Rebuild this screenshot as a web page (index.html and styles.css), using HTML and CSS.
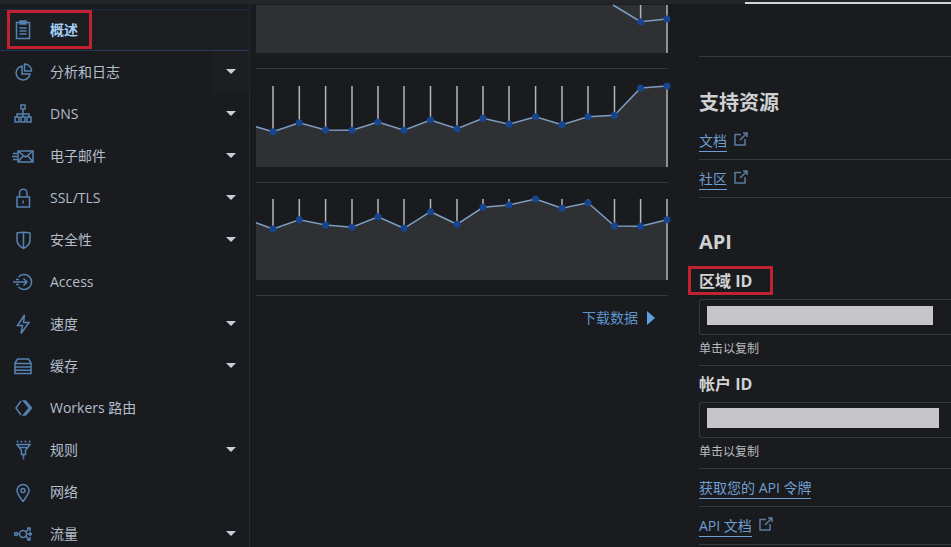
FILE: index.html
```html
<!DOCTYPE html>
<html>
<head>
  <meta name="viewport" content="width=device-width, initial-scale=1" />
  <title>概述</title>
  <link rel="stylesheet" href="styles.css">
</head>
<body>
  <div class="top-strip"><div class="top-line"></div></div>
  <div class="layout">
    <nav class="sidebar">
      <a class="nav-item active">
        <svg class="icon" viewBox="0 0 20 20"><path d="M3.500 2.500h13v16h-13zM7 1h6v3H7zM6.500 8h7M6.500 11h7M6.500 14h7"/></svg>
        <span>概述</span>
        <b class="mark"></b>
      </a>
      <a class="nav-item hover">
        <svg class="icon" viewBox="0 0 20 20"><path d="M9 4a7 7 0 1 0 8 8H9zM11.500 2a7 7 0 0 1 7 7h-7z"/></svg>
        <span>分析和日志</span><i class="caret"></i>
      </a>
      <a class="nav-item">
        <svg class="icon" viewBox="0 0 20 20"><path d="M8 1h4v4H8zM10 5v5M4 13v-3h12v3M10 10v3M2 13h4v5H2zM8 13h4v5H8zM14 13h4v5h-4z"/></svg>
        <span>DNS</span><i class="caret"></i>
      </a>
      <a class="nav-item">
        <svg class="icon wide" viewBox="0 0 24 20"><path d="M8 5h15v11H8zM8 5l7.500 6L23 5M8 16l5.500-6.500M23 16l-5.500-6.500M3 7.500h4M2 10.500h5M3 13.500h4"/></svg>
        <span>电子邮件</span><i class="caret"></i>
      </a>
      <a class="nav-item">
        <svg class="icon" viewBox="0 0 20 20"><path d="M4 9h12.500v10H4zM6.500 9V5a3.700 3.700 0 0 1 7.500 0v4M10.200 12.500v3"/></svg>
        <span>SSL/TLS</span><i class="caret"></i>
      </a>
      <a class="nav-item">
        <svg class="icon" viewBox="0 0 20 20"><path d="M4 3q6.500-1.500 13 0v7c0 4-2.500 6.500-6.500 8.500C6.500 16.500 4 14 4 10zM10.500 2.500v16"/></svg>
        <span>安全性</span>
        <i class="caret"></i>
      </a>
      <a class="nav-item">
        <svg class="icon wide" viewBox="0 0 24 20"><path d="M8.500 5A7.500 7.500 0 1 1 8.500 15M3 10h14M13.500 6.500 17 10l-3.500 3.500M6 7.500h3M6 12.500h3"/></svg>
        <span>Access</span>
      </a>
      <a class="nav-item">
        <svg class="icon" viewBox="0 0 20 20"><path d="M11.500 1 4.500 11.500h5L8 19.500 16 8.500h-5.500z"/></svg>
        <span>速度</span><i class="caret"></i>
      </a>
      <a class="nav-item">
        <svg class="icon" viewBox="0 0 20 20"><path d="M4.500 3h11L18 7v4H2V7zM2 7.500h16M2 11h16v6.500H2zM2 14.200h16"/></svg>
        <span>缓存</span><i class="caret"></i>
      </a>
      <a class="nav-item">
        <svg class="icon" viewBox="0 0 20 20"><path d="M8 3 3 10l5 7M10.500 3h2l6 7-6 7h-2l6-7z"/></svg>
        <span>Workers 路由</span>
      </a>
      <a class="nav-item">
        <svg class="icon" viewBox="0 0 20 20"><path d="M4 4.500h13l-4.500 6v4h-4v-4zM7 7.500h7M10.500 14.500v3"/><path class="icon-dots" d="M4.500 1.500h0M8.500 1.500h0M12.500 1.500h0M16.500 1.500h0M10.500 18.500h0"/></svg>
        <span>规则</span><i class="caret"></i>
      </a>
      <a class="nav-item">
        <svg class="icon" viewBox="0 0 20 20"><path d="M10 19.500C7 15 4 12 4 8.500a6 6 0 0 1 12 0C16 12 13 15 10 19.500z"/><circle cx="10" cy="8.500" r="2"/></svg>
        <span>网络</span>
      </a>
      <a class="nav-item">
        <svg class="icon wide" viewBox="0 0 24 20"><circle cx="6" cy="10" r="1.500"/><circle cx="13" cy="10" r="3.500"/><path d="M7.500 10h2M16 8l3-4M16 12l3 4M16.500 10h5M19.500 8l2 2-2 2M17 4h3v3M17 16h3v-3"/></svg>
        <span>流量</span><i class="caret"></i>
      </a>
    </nav>

    <main class="charts">
      <div class="chart-row first">
        <svg class="chart short" viewBox="0 0 412 48">
          <path class="area" d="M0 0H411V48H0z"/>
          <path class="ticks" d="M384.600 0V16.700M411 0V48"/>
          <path class="line" d="M357 0 384.600 16.700 411 14"/>
          <path class="dots" d="M384.600 16.700h0M411 14h0"/>
        </svg>
      </div>
      <div class="chart-row">
        <svg class="chart" viewBox="0 0 412 81">
          <path class="area" d="M0 40.700 17 45.700 43.300 36.700 69.600 44 96 44.300 122 36 148 44.300 174.500 34 201 42.700 227 32.300 253 38.300 279.600 30.700 306 38.700 332 30.700 358.500 29.300 384.600 2 411 0V81H0z"/>
          <path class="ticks" d="M17 0V45.700M43.300 0V36.700M69.600 0V44M96 0V44.300M122 0V36M148 0V44.300M174.500 0V34M201 0V42.700M227 0V32.300M253 0V38.300M279.600 0V30.700M306 0V38.700M332 0V30.700M358.500 0V29.300M411 0V81"/>
          <path class="line" d="M0 40.700 17 45.700 43.300 36.700 69.600 44 96 44.300 122 36 148 44.300 174.500 34 201 42.700 227 32.300 253 38.300 279.600 30.700 306 38.700 332 30.700 358.500 29.300 384.600 2 411 0"/>
          <path class="dots" d="M17 45.700h0M43.300 36.700h0M69.600 44h0M96 44.300h0M122 36h0M148 44.300h0M174.500 34h0M201 42.700h0M227 32.300h0M253 38.300h0M279.600 30.700h0M306 38.700h0M332 30.700h0M358.500 29.300h0M384.600 2h0M411 0h0"/>
        </svg>
      </div>
      <div class="chart-row last">
        <svg class="chart" viewBox="0 0 412 81">
          <path class="area" d="M0 23.700 17 30 43.300 20.700 69.600 26 96 28.300 122 17.700 148 29.300 174.500 12.700 201 25.300 227 8.300 253 6 279.600 0 306 9.300 332 3.700 358.500 27 384.600 27.300 411 20.700V81H0z"/>
          <path class="ticks" d="M17 0V30M43.300 0V20.700M69.600 0V26M96 0V28.300M122 0V17.700M148 0V29.300M174.500 0V12.700M201 0V25.300M227 0V8.300M253 0V6M306 0V9.300M332 0V3.700M358.500 0V27M384.600 0V27.300M411 0V81"/>
          <path class="line" d="M0 23.700 17 30 43.300 20.700 69.600 26 96 28.300 122 17.700 148 29.300 174.500 12.700 201 25.300 227 8.300 253 6 279.600 0 306 9.300 332 3.700 358.500 27 384.600 27.300 411 20.700"/>
          <path class="dots" d="M17 30h0M43.300 20.700h0M69.600 26h0M96 28.300h0M122 17.700h0M148 29.300h0M174.500 12.700h0M201 25.300h0M227 8.300h0M253 6h0M279.600 0h0M306 9.300h0M332 3.700h0M358.500 27h0M384.600 27.300h0M411 20.700h0"/>
        </svg>
      </div>
      <div class="download">
        <span>下载数据</span><i class="arrow"></i>
      </div>
    </main>

    <aside class="panel">
      <div class="panel-top"></div>
      <h3 class="title-big">支持资源</h3>
      <div class="link-row first-link">
        <a class="link">文档</a>
        <svg class="ext" viewBox="0 0 14 14"><path d="M7 2.500H1V13h10V7M6 8l7-7M9 1h4v4"/></svg>
      </div>
      <div class="link-row">
        <a class="link">社区</a>
        <svg class="ext" viewBox="0 0 14 14"><path d="M7 2.500H1V13h10V7M6 8l7-7M9 1h4v4"/></svg>
      </div>
      <h3 class="title-api">API</h3>
      <div class="id-label zone"><span class="boxed">区域 ID</span></div>
      <div class="id-box"><div class="blank blank-zone"></div></div>
      <div class="hint">单击以复制</div>
      <div class="id-label account">帐户 ID</div>
      <div class="id-box"><div class="blank blank-account"></div></div>
      <div class="hint">单击以复制</div>
      <div class="link-row">
        <a class="link">获取您的 API 令牌</a>
      </div>
      <div class="link-row">
        <a class="link">API 文档</a>
        <svg class="ext" viewBox="0 0 14 14"><path d="M7 2.500H1V13h10V7M6 8l7-7M9 1h4v4"/></svg>
      </div>
    </aside>
  </div>
</body>
</html>
```

FILE: styles.css
```css
* {
  box-sizing: border-box;
}
body {
  margin: 0;
  height: 547px;
  overflow: hidden;
  background-color: #191b1e;
  color: #c4c8cc;
  font-family: "Open Sans", "Noto Sans CJK SC", sans-serif;
  font-size: 14px;
}
.top-strip {
  display: flex;
  justify-content: flex-end;
  height: 4px;
  padding-top: 2px;
  background-color: #232527;
}
.top-line {
  width: 206px;
  height: 2px;
  background-color: #d4d6d6;
}
.layout {
  display: flex;
  height: 543px;
}

/* sidebar */
.sidebar {
  flex: none;
  width: 250px;
  padding-top: 5px;
  border-right: 1px solid #26282c;
  background-color: #191b1f;
}
.nav-item {
  position: relative;
  display: flex;
  align-items: center;
  height: 42px;
  padding-left: 13px;
  color: #b3bfcb;
}
.nav-item span {
  position: relative;
  top: -1px;
}
.nav-item.active {
  border-top: 1px solid #1c2a44;
  border-bottom: 1px solid #24385c;
  background-color: #1c1e21;
  color: #a3d0f7;
  font-weight: bold;
}
.nav-item.hover::after {
  content: "";
  position: absolute;
  top: 0;
  right: 0;
  width: 37px;
  height: 42px;
  background-color: #1c1e21;
}
.mark {
  position: absolute;
  left: 7px;
  top: 0;
  width: 85px;
  height: 39px;
  border: 3px solid #c0222f;
}
.icon {
  flex: none;
  width: 20px;
  height: 20px;
  margin-right: 17px;
  fill: none;
  stroke: #5583b3;
  stroke-width: 1.500;
}
.icon.wide {
  width: 24px;
  margin-left: -3px;
  margin-right: 16px;
}
.icon-dots {
  stroke-width: 2;
  stroke-linecap: round;
}
.caret {
  position: absolute;
  z-index: 1;
  right: 13px;
  top: 18px;
  width: 0;
  height: 0;
  border-top: 5px solid #c6d0da;
  border-left: 5px solid transparent;
  border-right: 5px solid transparent;
}

/* charts */
.charts {
  flex: none;
  width: 412px;
  margin-left: 6px;
}
.chart-row {
  padding: 17px 0 15px;
  border-bottom: 1px solid #36383b;
}
.chart-row.first {
  padding-top: 1px;
}
.chart-row.last {
  padding-top: 16px;
}
.chart {
  display: block;
  width: 412px;
  height: 81px;
  overflow: visible;
}
.chart.short {
  height: 48px;
}
.area {
  fill: #2e3033;
}
.ticks {
  fill: none;
  stroke: #b3b5b8;
  stroke-width: 1.500;
}
.line {
  fill: none;
  stroke: #7f9dc0;
  stroke-width: 1.500;
}
.dots {
  fill: none;
  stroke: #17458f;
  stroke-width: 7;
  stroke-linecap: round;
}
.download {
  display: flex;
  justify-content: flex-end;
  align-items: center;
  gap: 9px;
  padding: 12px 13px 0 0;
  color: #5f93cb;
  line-height: 20px;
}
.arrow {
  width: 0;
  height: 0;
  border-left: 8px solid #5aa2e2;
  border-top: 7px solid transparent;
  border-bottom: 7px solid transparent;
}

/* right panel */
.panel {
  flex: 1;
  min-width: 0;
  margin-left: 31px;
}
.panel-top {
  height: 53px;
  border-bottom: 1px solid #36383b;
}
.title-big {
  margin: 32px 0 0;
  font-size: 20px;
  line-height: 28px;
  color: #cfd0d1;
}
.title-api {
  margin: 32px 0 0;
  font-size: 20px;
  line-height: 24px;
  color: #cfd0d1;
}
.link-row {
  display: flex;
  align-items: flex-start;
  padding: 9px 0 7px;
  border-bottom: 1px solid #36383b;
  line-height: 20px;
}
.first-link {
  margin-top: 5px;
}
.link {
  border-bottom: 1px solid #6f9fd0;
  color: #6f9fd0;
}
.ext {
  width: 14px;
  height: 14px;
  margin: 1px 0 0 7px;
  fill: none;
  stroke: #5e7c9e;
  stroke-width: 1.500;
}
.id-label {
  font-size: 16px;
  font-weight: bold;
  line-height: 22px;
  color: #d2d3d4;
}
.zone {
  margin-top: 15px;
}
.account {
  margin-top: 7px;
}
.boxed {
  display: block;
  width: 79px;
  height: 23px;
  margin-left: -8px;
  padding: 1px 0 0 8px;
  outline: 3px solid #c0222f;
}
.id-box {
  height: 36px;
  margin-top: 7px;
  padding: 6px 0 0 7px;
  border: 1px solid #36383b;
  border-right: none;
  border-radius: 3px 0 0 3px;
}
.account + .id-box {
  padding-top: 5px;
}
.blank {
  background-color: #c6c5c9;
}
.blank-zone {
  width: 226px;
  height: 19px;
}
.blank-account {
  width: 232px;
  height: 20px;
}
.hint {
  margin-top: 6px;
  padding-bottom: 8px;
  border-bottom: 1px solid #36383b;
  font-size: 12px;
  line-height: 16px;
  color: #b9bbbd;
}
```
